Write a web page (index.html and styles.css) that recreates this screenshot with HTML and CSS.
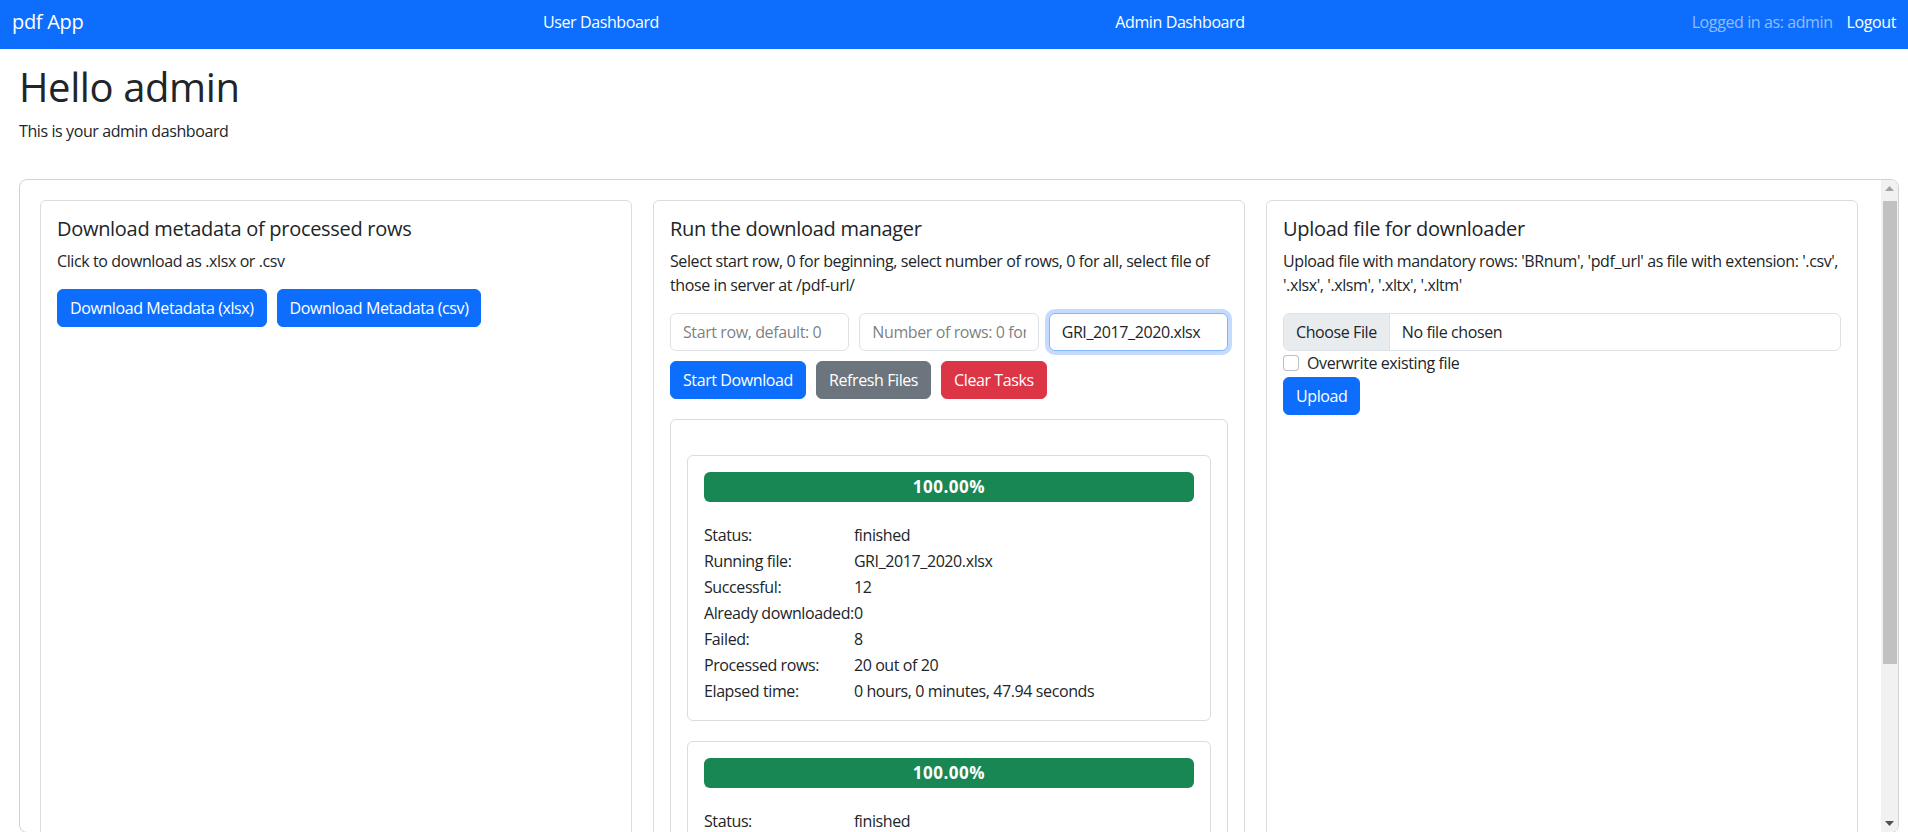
FILE: index.html
```html
<!DOCTYPE html>
<html lang="en">
<head>
<meta charset="utf-8">
<title>pdf App - Admin Dashboard</title>
<link rel="stylesheet" href="styles.css">
</head>
<body>
<nav class="navbar">
  <a class="brand" href="#">pdf App</a>
  <ul class="nav-links">
    <li><a href="#">User Dashboard</a></li>
    <li><a href="#">Admin Dashboard</a></li>
  </ul>
  <div class="nav-right">
    <span class="nav-text">Logged in as: admin</span>
    <a class="nav-logout" href="#">Logout</a>
  </div>
</nav>

<main class="page">
  <h1 class="title">Hello admin</h1>
  <p class="subtitle">This is your admin dashboard</p>

  <div class="panel">
    <div class="panel-body">
      <div class="panel-row">
        <section class="card">
          <h5 class="card-title">Download metadata of processed rows</h5>
          <p class="card-text">Click to download as .xlsx or .csv</p>
          <div class="btn-row">
            <button class="btn btn-primary">Download Metadata (xlsx)</button>
            <button class="btn btn-primary">Download Metadata (csv)</button>
          </div>
        </section>

        <section class="card">
          <h5 class="card-title">Run the download manager</h5>
          <p class="card-text">Select start row, 0 for beginning, select number of rows, 0 for all, select file of those in server at /pdf-url/</p>
          <div class="input-row">
            <input class="form-control" type="text" placeholder="Start row, default: 0">
            <input class="form-control" type="text" placeholder="Number of rows: 0 for all">
            <input class="form-control focused" type="text" value="GRI_2017_2020.xlsx">
          </div>
          <div class="btn-row">
            <button class="btn btn-primary">Start Download</button>
            <button class="btn btn-secondary">Refresh Files</button>
            <button class="btn btn-danger">Clear Tasks</button>
          </div>
          <div class="tasks">
            <div class="task-card">
              <div class="progress">100.00%</div>
              <table class="task-table">
                <tr><td>Status:</td><td>finished</td></tr>
                <tr><td>Running file:</td><td>GRI_2017_2020.xlsx</td></tr>
                <tr><td>Successful:</td><td>12</td></tr>
                <tr><td>Already downloaded:</td><td>0</td></tr>
                <tr><td>Failed:</td><td>8</td></tr>
                <tr><td>Processed rows:</td><td>20 out of 20</td></tr>
                <tr><td>Elapsed time:</td><td>0 hours, 0 minutes, 47.94 seconds</td></tr>
              </table>
            </div>
            <div class="task-card">
              <div class="progress">100.00%</div>
              <table class="task-table">
                <tr><td>Status:</td><td>finished</td></tr>
                <tr><td>Running file:</td><td>GRI_2017_2020.xlsx</td></tr>
                <tr><td>Successful:</td><td>12</td></tr>
                <tr><td>Already downloaded:</td><td>0</td></tr>
                <tr><td>Failed:</td><td>8</td></tr>
                <tr><td>Processed rows:</td><td>20 out of 20</td></tr>
                <tr><td>Elapsed time:</td><td>0 hours, 0 minutes, 47.94 seconds</td></tr>
              </table>
            </div>
          </div>
        </section>

        <section class="card">
          <h5 class="card-title">Upload file for downloader</h5>
          <p class="card-text">Upload file with mandatory rows: 'BRnum', 'pdf_url' as file with extension: '.csv', '.xlsx', '.xlsm', '.xltx', '.xltm'</p>
          <label class="file-input">
            <span class="file-btn">Choose File</span>
            <span class="file-name">No file chosen</span>
          </label>
          <label class="form-check">
            <input class="check" type="checkbox">
            <span>Overwrite existing file</span>
          </label>
          <button class="btn btn-primary">Upload</button>
        </section>
      </div>
    </div>

    <div class="scrollbar" aria-hidden="true">
      <div class="sb-btn">
        <svg width="9" height="5" viewBox="0 0 9 5"><path d="M0 5h9L4.5 0z" fill="#a3a3a3"/></svg>
      </div>
      <div class="sb-track"><div class="sb-thumb"></div></div>
      <div class="sb-btn">
        <svg width="9" height="5" viewBox="0 0 9 5"><path d="M0 0h9L4.5 5z" fill="#505050"/></svg>
      </div>
    </div>
  </div>
</main>
</body>
</html>
```

FILE: styles.css
```css
* { box-sizing: border-box; }

html, body {
  margin: 0;
  height: 100%;
  overflow: hidden;
}

body {
  font-family: "Open Sans", "Noto Sans", "Liberation Sans", sans-serif;
  font-size: 16px;
  line-height: 24px;
  letter-spacing: -0.4px;
  color: #212529;
  background: #fff;
}

a { text-decoration: none; }

/* ---------- navbar ---------- */
.navbar {
  display: flex;
  align-items: center;
  height: 49px;
  padding: 0 12px 6px 12px;
  background: #0d6efd;
}

.brand {
  flex: 0 0 439px;
  font-size: 20px;
  line-height: 30px;
  letter-spacing: -0.3px;
  color: #fff;
}

.nav-links {
  display: flex;
  gap: 279px;
  list-style: none;
  margin: 0;
  padding: 0;
}

.nav-links li {
  width: 300px;
  text-align: center;
}

.nav-links a { color: #fff; }

.nav-right {
  margin-left: auto;
  display: flex;
  gap: 14px;
}

.nav-text { color: rgba(255, 255, 255, 0.55); }
.nav-logout { color: #fff; }

/* ---------- page ---------- */
.page {
  padding: 14px 9px 0 19px;
}

.title {
  margin: 0 0 8px;
  font-size: 40px;
  font-weight: 500;
  line-height: 48px;
  letter-spacing: -0.4px;
}

.subtitle {
  margin: 0 0 36px;
}

.panel {
  display: flex;
  height: calc(100vh - 178px);
  overflow: hidden;
  border: 1px solid #d2d2d2;
  border-radius: 8px;
}

.panel-body {
  flex: 1;
  min-width: 0;
  overflow: hidden;
  padding: 20px 23px 20px 20px;
}

.scrollbar {
  flex: 0 0 17px;
  display: flex;
  flex-direction: column;
  background: #f1f1f1;
}

.sb-btn {
  flex: 0 0 17px;
  display: flex;
  align-items: center;
  justify-content: center;
}

.sb-track {
  flex: 1;
  padding: 4px 1px 0 2px;
}

.sb-thumb {
  height: 463px;
  background: #c1c1c1;
}

.panel-row {
  display: grid;
  grid-template-columns: repeat(3, 1fr);
  gap: 21px;
  align-items: stretch;
}

/* ---------- cards ---------- */
.card {
  border: 1px solid rgba(0, 0, 0, 0.14);
  border-radius: 6px;
  padding: 16px;
  min-width: 0;
}

.card-title {
  margin: 0 0 8px;
  font-size: 20px;
  font-weight: 500;
  line-height: 24px;
  letter-spacing: -0.3px;
}

.card-text {
  margin: 0 0 16px;
}

.btn-row {
  display: flex;
  gap: 10px;
}

.btn {
  display: inline-block;
  font-family: inherit;
  font-size: 16px;
  line-height: 24px;
  letter-spacing: -0.4px;
  padding: 6px 12px;
  border: 1px solid transparent;
  border-radius: 6px;
  color: #fff;
  cursor: pointer;
}

.btn-primary { background: #0d6efd; border-color: #0d6efd; }
.btn-secondary { background: #6c757d; border-color: #6c757d; }
.btn-danger { background: #dc3545; border-color: #dc3545; }

/* ---------- inputs ---------- */
.input-row {
  display: grid;
  grid-template-columns: repeat(3, 1fr);
  gap: 10px;
  margin-bottom: 10px;
}

.form-control {
  display: block;
  width: 100%;
  min-width: 0;
  height: 38px;
  padding: 6px 12px;
  font-family: inherit;
  font-size: 16px;
  line-height: 24px;
  letter-spacing: -0.4px;
  color: #212529;
  background: #fff;
  border: 1px solid #dee2e6;
  border-radius: 6px;
  outline: none;
}

.form-control::placeholder { color: rgba(33, 37, 41, 0.6); }

.form-control.focused {
  border-color: #86b7fe;
  box-shadow: 0 0 0 4px rgba(13, 110, 253, 0.25);
}

/* ---------- tasks ---------- */
.tasks {
  margin-top: 20px;
  border: 1px solid rgba(0, 0, 0, 0.14);
  border-radius: 6px;
  padding: 15px 16px 16px;
}

.task-card {
  margin-top: 20px;
  border: 1px solid rgba(0, 0, 0, 0.14);
  border-radius: 6px;
  padding: 16px;
}

.progress {
  height: 30px;
  line-height: 30px;
  border-radius: 6px;
  background: #198754;
  color: #fff;
  font-size: 17px;
  font-weight: 700;
  letter-spacing: 0.5px;
  text-align: center;
}

.task-table {
  margin-top: 20px;
  border-collapse: collapse;
}

.task-table td {
  padding: 1px 0;
  white-space: nowrap;
  vertical-align: top;
}

/* ---------- upload ---------- */
.file-input {
  display: flex;
  height: 38px;
  border: 1px solid #dee2e6;
  border-radius: 6px;
  overflow: hidden;
}

.file-btn {
  padding: 6px 12px;
  background: #e9ecef;
  border-right: 1px solid #dee2e6;
  margin-right: 12px;
}

.file-name { padding: 6px 0; }

.form-check {
  display: flex;
  align-items: flex-start;
  gap: 8px;
  height: 24px;
  margin-bottom: 2px;
}

.check {
  appearance: none;
  -webkit-appearance: none;
  width: 16px;
  height: 16px;
  margin: 4px 0 0;
  border: 1px solid rgba(0, 0, 0, 0.25);
  border-radius: 4px;
  background: #fff;
}
```
